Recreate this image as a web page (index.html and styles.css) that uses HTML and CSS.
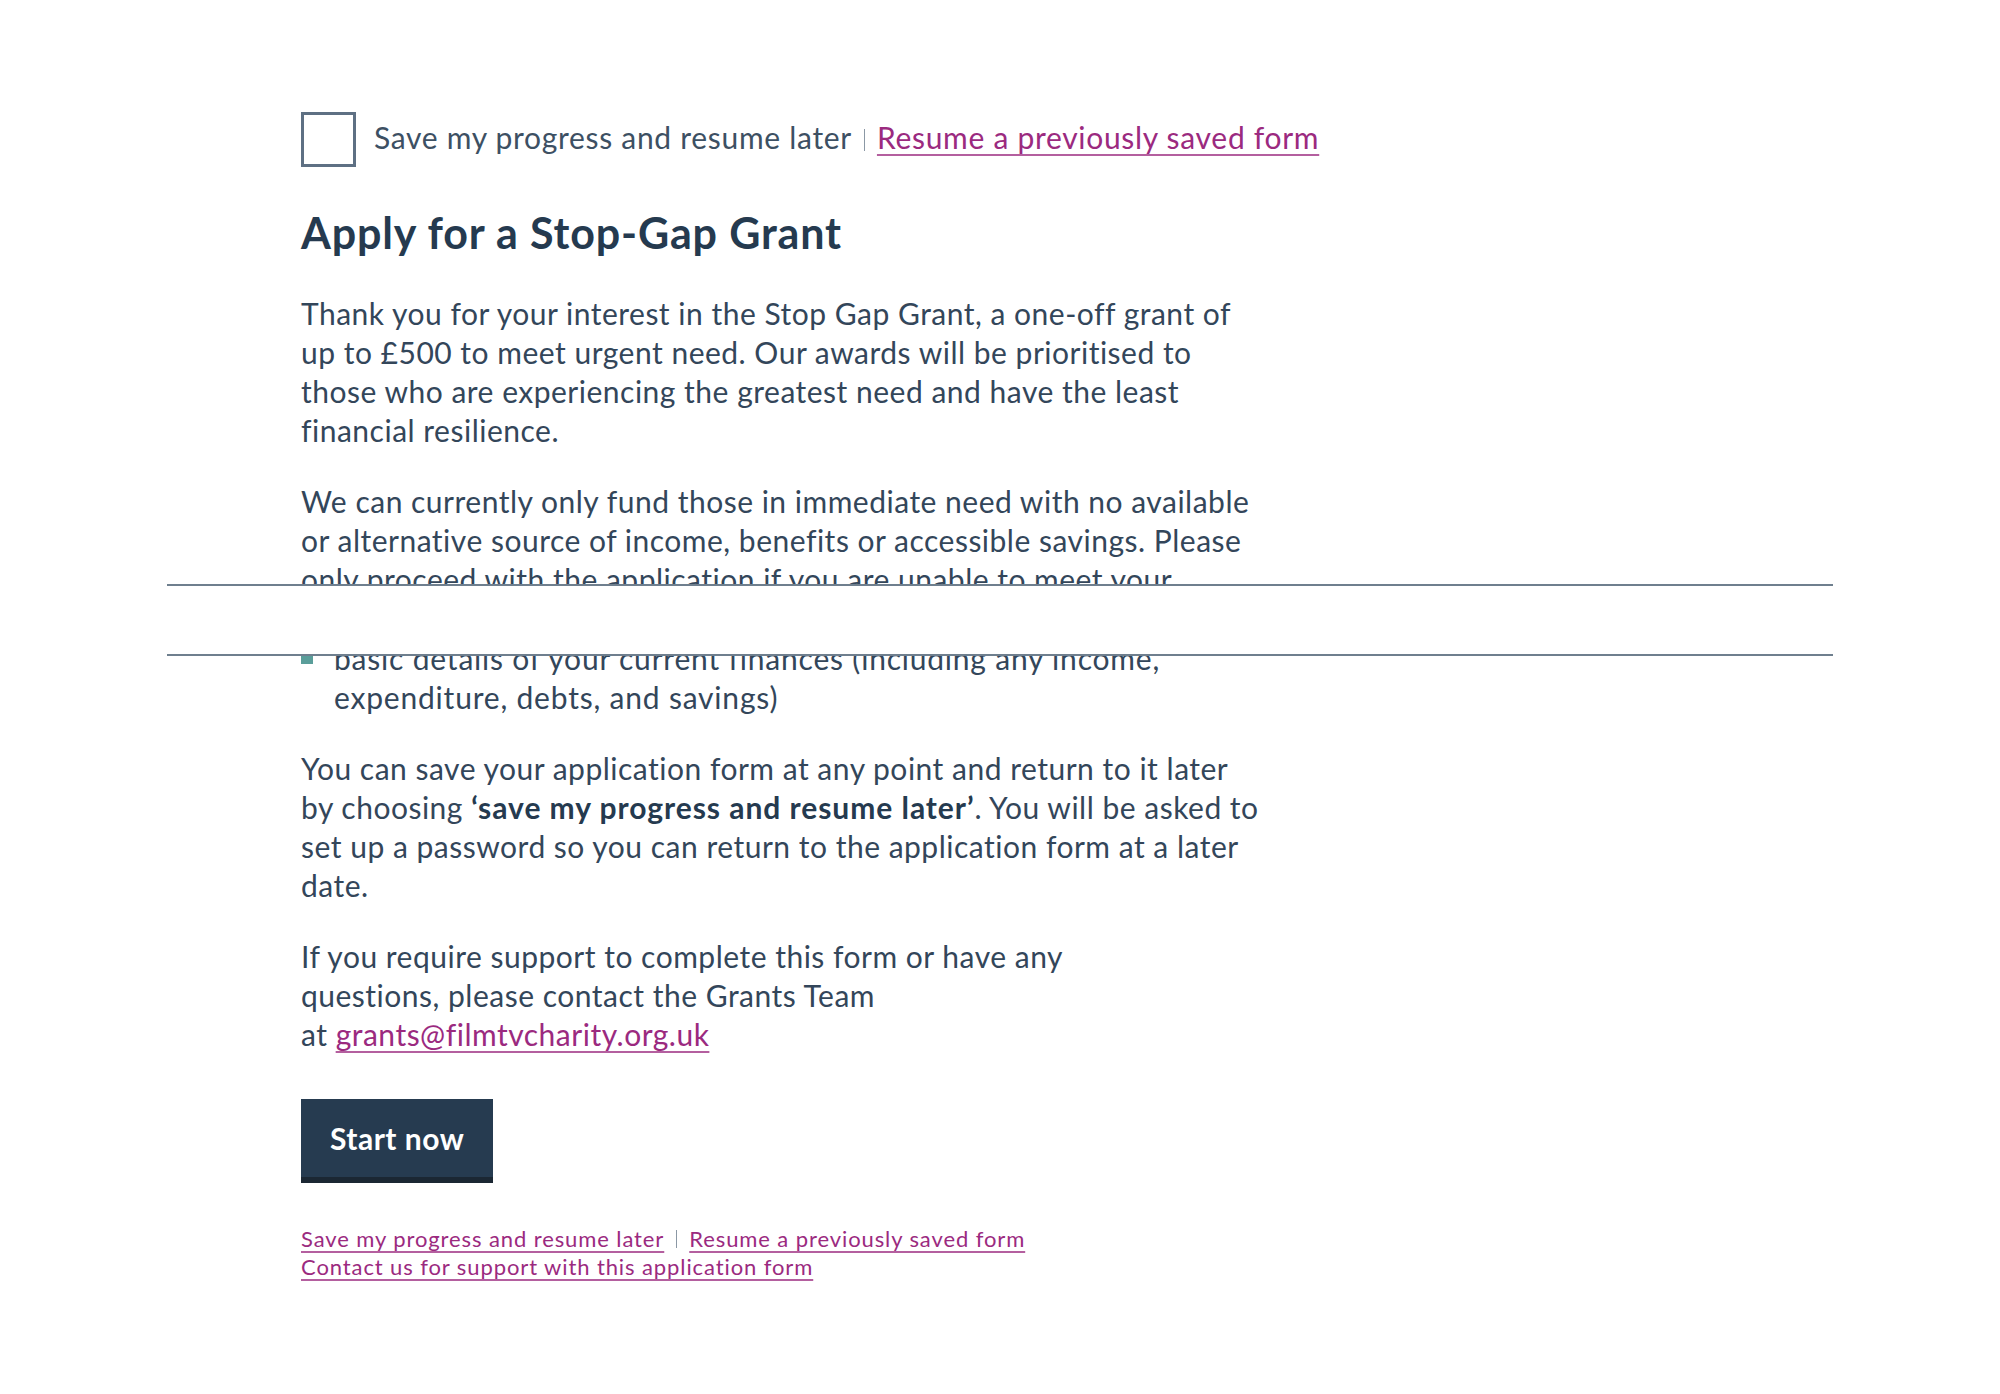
FILE: index.html
```html
<!DOCTYPE html>
<html lang="en">
<head>
<meta charset="utf-8">
<title>Apply for a Stop-Gap Grant</title>
<link rel="stylesheet" href="styles.css">
</head>
<body>
<main class="page">
  <div class="save-row inner">
    <label class="save-check">
      <span class="box"></span>
      <span class="save-label">Save my progress and resume later</span>
    </label>
    <span class="sep"></span>
    <a class="link" href="#">Resume a previously saved form</a>
  </div>

  <h1 class="title inner">Apply for a Stop-Gap Grant</h1>

  <div class="clip-top">
    <p class="para">Thank you for your interest in the Stop Gap Grant, a one-off grant of<br>up to £500 to meet urgent need. Our awards will be prioritised to<br>those who are experiencing the greatest need and have the least<br>financial resilience.</p>
    <p class="para">We can currently only fund those in immediate need with no available<br>or alternative source of income, benefits or accessible savings. Please<br>only proceed with the application if you are unable to meet your<br>urgent need in any other way.</p>
  </div>

  <div class="clip-gap"></div>

  <div class="clip-bottom">
    <ul class="needs">
      <li>basic details of your current finances (including any income,<br>expenditure, debts, and savings)</li>
    </ul>
  </div>

  <p class="para inner">You can save your application form at any point and return to it later<br>by choosing <strong>‘save my progress and resume later’</strong>. You will be asked to<br>set up a password so you can return to the application form at a later<br>date.</p>

  <p class="para inner">If you require support to complete this form or have any<br>questions, please contact the Grants Team<br>at <a class="link" href="#">grants@filmtvcharity.org.uk</a></p>

  <div class="inner actions">
    <button class="start" type="button">Start now</button>
  </div>

  <div class="footer-links inner">
    <div class="footer-row">
      <a class="link" href="#">Save my progress and resume later</a>
      <span class="sep small"></span>
      <a class="link" href="#">Resume a previously saved form</a>
    </div>
    <div class="footer-row">
      <a class="link" href="#">Contact us for support with this application form</a>
    </div>
  </div>
</main>
</body>
</html>
```

FILE: styles.css
```css
html, body {
  margin: 0;
  padding: 0;
  background: #ffffff;
}

body {
  font-family: Lato, "Noto Sans", "Liberation Sans", sans-serif;
  color: #33465a;
  font-size: 30px;
  line-height: 39px;
  letter-spacing: 0.5px;
}

.page {
  width: 1666px;
  margin: 0 auto;
  padding-top: 112px;
  padding-bottom: 80px;
}

.inner {
  margin-left: 134px;
}

.save-row {
  display: flex;
  align-items: center;
  height: 55px;
  letter-spacing: 0.7px;
}

.save-check {
  display: flex;
  align-items: center;
  gap: 18px;
  color: #3d5063;
}

.save-label {
  margin-bottom: 4px;
}

.save-row > .link {
  margin-bottom: 4px;
}

.box {
  width: 49px;
  height: 49px;
  border: 3px solid #5e7083;
  background: #fff;
}

.sep {
  width: 1px;
  height: 22px;
  background: #8b98a5;
  margin: 0 12px;
}

.sep.small {
  height: 18px;
  margin: 0 12px;
}

.link {
  color: #9b2a7f;
  text-decoration: underline;
  text-decoration-color: rgba(155, 42, 127, 0.75);
  text-decoration-thickness: 2px;
  text-underline-offset: 5px;
}

.title {
  margin-top: 41px;
  margin-bottom: 36px;
  font-size: 43px;
  line-height: 50px;
  font-weight: 700;
  letter-spacing: 0.85px;
  color: #253a4f;
}

.para {
  margin-top: 0;
  margin-bottom: 32px;
}

.para strong {
  font-weight: 700;
  letter-spacing: 0.95px;
  color: #253a4f;
}

.clip-top {
  height: 290px;
  overflow: hidden;
  padding-left: 134px;
  border-bottom: 2px solid #6f7f8e;
}

.clip-gap {
  height: 68px;
}

.clip-bottom {
  overflow: hidden;
  padding-left: 134px;
  border-top: 2px solid #6f7f8e;
  margin-bottom: 32px;
}

.needs {
  list-style: none;
  margin: -17px 0 0 0;
  padding: 0;
}

.needs li {
  position: relative;
  padding-left: 33px;
  letter-spacing: 0.8px;
}

.needs li::before {
  content: "";
  position: absolute;
  left: 0;
  top: 13px;
  width: 12px;
  height: 12px;
  background: #5a9e9a;
}

.actions {
  margin-top: 45px;
}

.start {
  display: block;
  height: 84px;
  padding: 0 29px;
  border: 0;
  border-bottom: 6px solid #1b2733;
  background: #263b50;
  color: #ffffff;
  font-family: Lato, "Noto Sans", "Liberation Sans", sans-serif;
  font-size: 30px;
  font-weight: 700;
  letter-spacing: 0.5px;
  line-height: 78px;
  cursor: pointer;
}

.footer-links {
  margin-top: 42px;
  font-size: 22px;
  line-height: 28px;
  letter-spacing: 0.9px;
}

.footer-row {
  display: flex;
  align-items: center;
}

.footer-row .link {
  text-underline-offset: 4px;
  text-decoration-thickness: 1.5px;
}
```
